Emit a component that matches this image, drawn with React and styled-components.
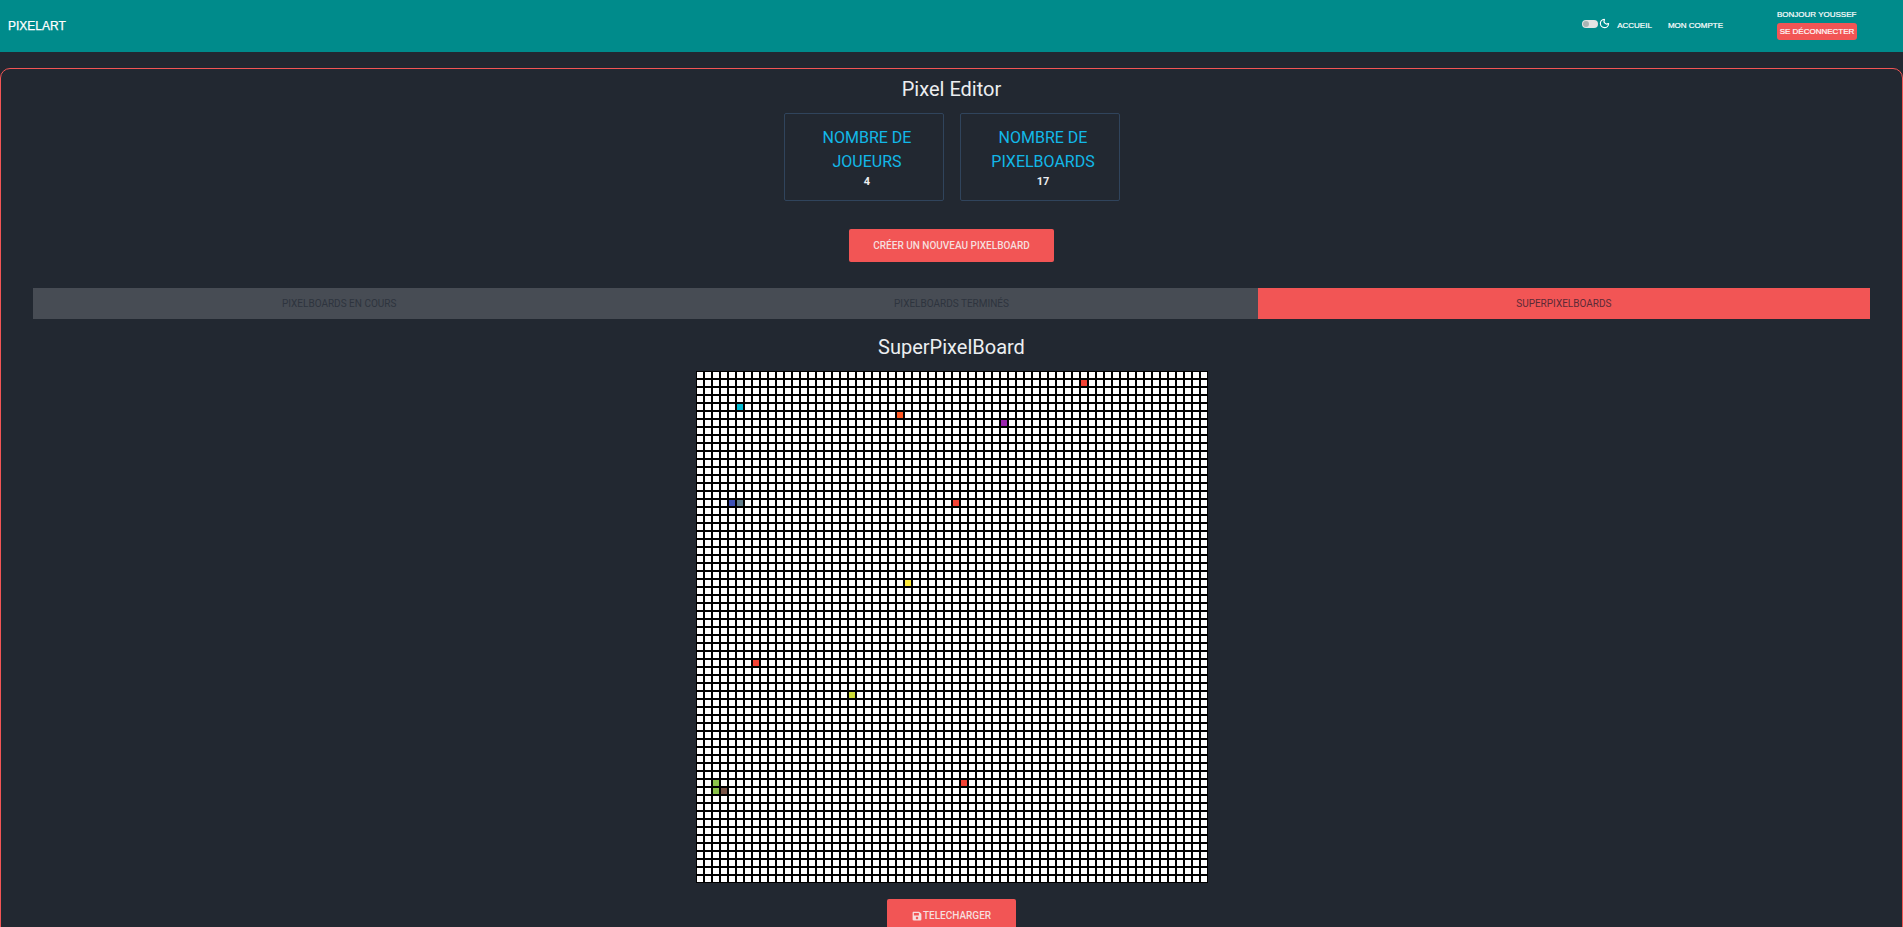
import styled, { createGlobalStyle } from 'styled-components'
import { Moon } from 'lucide-react'
import { FaSave } from 'react-icons/fa'

const GRID_SIZE = 64

const painted = {
  '1-48': '#F44336',
  '4-5': '#00BCD4',
  '5-25': '#FF5722',
  '6-38': '#9C27B0',
  '16-4': '#3F51B5',
  '16-5': '#607D8B',
  '16-32': '#F44336',
  '26-26': '#FFEB3B',
  '36-7': '#F44336',
  '40-19': '#CDDC39',
  '51-2': '#8BC34A',
  '51-33': '#F44336',
  '52-2': '#8BC34A',
  '52-3': '#795548',
}

const GlobalStyle = createGlobalStyle`
  html {
    overflow: hidden;
  }

  body {
    margin: 0;
    background-color: #222831;
    font-family: "Liberation Sans", Arial, sans-serif;
  }
`

const Navbar = styled.nav`
  display: flex;
  align-items: center;
  justify-content: space-between;
  height: 52px;
  padding: 0 46px 0 8px;
  background-color: #008b8b;
  color: #fff;
`

const Brand = styled.a`
  font-size: 12px;
  line-height: 16px;
  -webkit-text-stroke: 0.25px #fff;
`

const NavRight = styled.div`
  display: flex;
  align-items: center;
`

const ThemeToggle = styled.div`
  display: flex;
  align-items: center;
  gap: 1px;
  margin-right: 7px;
  margin-top: -5px;
`

const Track = styled.span`
  display: block;
  position: relative;
  width: 16px;
  height: 8px;
  border-radius: 4px;
  background-color: #e4e4e4;

  &::after {
    content: '';
    position: absolute;
    top: 1px;
    left: 1px;
    width: 6px;
    height: 6px;
    border-radius: 50%;
    background-color: #a9b4b4;
  }
`

const NavLink = styled.a`
  font-size: 8px;
  line-height: 12px;
  margin-right: ${({ $gap }) => $gap}px;
  -webkit-text-stroke: 0.2px #fff;
`

const UserBox = styled.div`
  display: flex;
  flex-direction: column;
  align-items: stretch;
  width: 80px;
  gap: 2px;
  font-size: 8px;
  line-height: 12px;
  margin-top: -3px;
  -webkit-text-stroke: 0.2px #fff;
`

const LogoutButton = styled.button`
  height: 17px;
  padding: 0;
  border: 0;
  border-radius: 3px;
  background-color: #f25555;
  color: #fff;
  font-family: inherit;
  font-size: 8px;
`

const Main = styled.main`
  display: flex;
  flex-direction: column;
  align-items: center;
  margin-top: 16px;
  padding: 6px 32px 32px;
  border: 1px solid #f25555;
  border-radius: 10px;
  font-family: Roboto, sans-serif;
`

const Title = styled.h1`
  margin: 0 0 10px;
  font-size: 20px;
  font-weight: 400;
  line-height: 28px;
  color: #eceef0;
`

const Stats = styled.div`
  display: flex;
  gap: 16px;
  margin-bottom: 28px;
`

const StatCard = styled.div`
  box-sizing: border-box;
  width: 160px;
  height: 88px;
  padding: 12px 16px 0 23px;
  border: 1px solid #30445c;
  border-radius: 2px;
  text-align: center;
`

const StatLabel = styled.div`
  font-size: 16px;
  line-height: 24px;
  color: #12b8e8;
`

const StatValue = styled.div`
  margin-top: 1px;
  font-size: 11px;
  font-weight: 700;
  line-height: 14px;
  color: #eceef0;
`

const ActionButton = styled.button`
  display: flex;
  align-items: center;
  justify-content: center;
  gap: 1px;
  flex: none;
  width: ${({ $width }) => $width}px;
  height: 33px;
  padding: 0;
  border: 0;
  border-radius: 2px;
  background-color: #f25555;
  color: #f6dede;
  font-family: inherit;
  font-size: 10px;
  font-weight: 500;
`

const Tabs = styled.div`
  display: grid;
  grid-template-columns: repeat(3, 1fr);
  align-self: stretch;
  margin: 26px 0 14px;
`

const Tab = styled.div`
  height: 31px;
  font-size: 10px;
  line-height: 31px;
  text-align: center;
  background-color: ${({ $active }) => ($active ? '#f25555' : '#474c54')};
  color: ${({ $active }) => ($active ? '#5c2a35' : '#2e343e')};
`

const Board = styled.div`
  display: grid;
  grid-template-columns: repeat(${GRID_SIZE}, 8px);
  grid-auto-rows: 8px;
  margin-bottom: 16px;
`

const Cell = styled.div`
  box-sizing: border-box;
  border: 1px solid #000;
  background-color: #fff;
`

const cells = Array.from({ length: GRID_SIZE * GRID_SIZE }, (_, i) => {
  const row = Math.floor(i / GRID_SIZE)
  const col = i % GRID_SIZE
  return painted[`${row}-${col}`]
})

const App = () => {
  return <>
    <GlobalStyle />

    <Navbar>
      <Brand>PIXELART</Brand>
      <NavRight>
        <ThemeToggle>
          <Track />
          <Moon size={11} strokeWidth={2.5} />
        </ThemeToggle>
        <NavLink $gap={16}>ACCUEIL</NavLink>
        <NavLink $gap={54}>MON COMPTE</NavLink>
        <UserBox>
          <span>BONJOUR YOUSSEF</span>
          <LogoutButton>SE DÉCONNECTER</LogoutButton>
        </UserBox>
      </NavRight>
    </Navbar>

    <Main>
      <Title>Pixel Editor</Title>

      <Stats>
        <StatCard>
          <StatLabel>NOMBRE DE JOUEURS</StatLabel>
          <StatValue>4</StatValue>
        </StatCard>
        <StatCard>
          <StatLabel>NOMBRE DE PIXELBOARDS</StatLabel>
          <StatValue>17</StatValue>
        </StatCard>
      </Stats>

      <ActionButton $width={205}>CRÉER UN NOUVEAU PIXELBOARD</ActionButton>

      <Tabs>
        <Tab>PIXELBOARDS EN COURS</Tab>
        <Tab>PIXELBOARDS TERMINÉS</Tab>
        <Tab $active>SUPERPIXELBOARDS</Tab>
      </Tabs>

      <Title>SuperPixelBoard</Title>

      <Board>
        {cells.map((color, i) => (
          <Cell key={i} style={color ? { backgroundColor: color } : undefined} />
        ))}
      </Board>

      <ActionButton $width={129}>
        <FaSave size={10} />
        TELECHARGER
      </ActionButton>
    </Main>
  </>
}

export default App
